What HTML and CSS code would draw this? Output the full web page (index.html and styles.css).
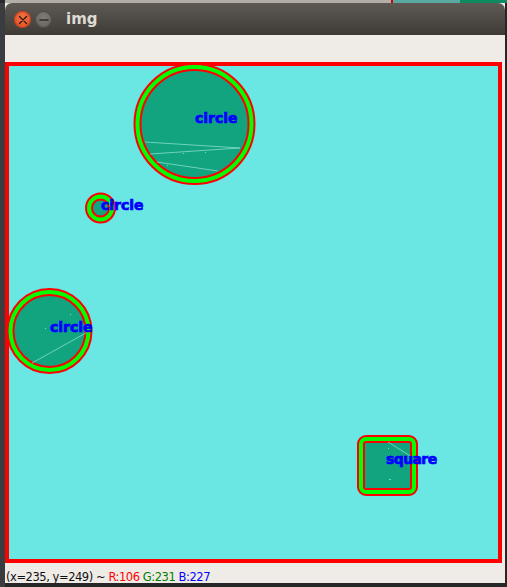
FILE: index.html
```html
<!DOCTYPE html>
<html>
<head>
<meta charset="utf-8">
<link rel="stylesheet" href="styles.css">
</head>
<body>
<div class="window">
  <div class="titlebar">
    <span class="btn btn-close"><svg width="10" height="10" viewBox="0 0 10 10"><path d="M1.5 1.5 L8.5 8.5 M8.5 1.5 L1.5 8.5" stroke="#3a1a10" stroke-width="1.4" stroke-linecap="round"/></svg></span>
    <span class="btn btn-min"><svg width="10" height="10" viewBox="0 0 10 10"><path d="M1 5 H9" stroke="#2e2c29" stroke-width="1.5" stroke-linecap="round"/></svg></span>
    <span class="title">img</span>
  </div>
  <div class="toolbar"></div>
  <div class="canvas-row">
    <svg class="canvas" width="497" height="501" viewBox="0 0 497 501">
      <rect x="2" y="2" width="493" height="497" fill="#6ae7e3" stroke="#ff0000" stroke-width="4"/>
      <!-- big circle -->
      <circle cx="189.5" cy="62" r="57" fill="#12a47f" stroke="#ff0000" stroke-width="8"/>
      <circle cx="189.5" cy="62" r="57" fill="none" stroke="#00ff00" stroke-width="4"/>
      <g class="streak">
        <line x1="140" y1="80" x2="235" y2="86"/>
        <line x1="145" y1="92" x2="235" y2="86"/>
        <line x1="152" y1="100" x2="213" y2="109"/>
      </g>
      <!-- small circle -->
      <circle cx="95.5" cy="146" r="11.5" fill="#12a47f" stroke="#ff0000" stroke-width="8"/>
      <circle cx="95.5" cy="146" r="11.5" fill="none" stroke="#00ff00" stroke-width="4"/>
      <!-- left circle -->
      <circle cx="44.5" cy="269" r="39" fill="#12a47f" stroke="#ff0000" stroke-width="8"/>
      <circle cx="44.5" cy="269" r="39" fill="none" stroke="#00ff00" stroke-width="4"/>
      <g class="streak">
        <line x1="27" y1="301" x2="81" y2="271"/>
      </g>
      <!-- square -->
      <rect x="356" y="377" width="53" height="53" rx="5" fill="#12a47f" stroke="#ff0000" stroke-width="8"/>
      <rect x="356" y="377" width="53" height="53" rx="5" fill="none" stroke="#00ff00" stroke-width="4"/>
      <g class="streak">
        <line x1="383" y1="380" x2="407" y2="395"/>
      </g>
      <g class="dots">
        <rect x="178" y="91" width="1" height="1"/>
        <rect x="200" y="90" width="1" height="1"/>
        <rect x="162" y="103" width="1" height="1"/>
        <rect x="40" y="266" width="1" height="1"/>
        <rect x="65" y="252" width="1" height="1"/>
        <rect x="384" y="417" width="2" height="1"/>
        <rect x="383" y="386" width="1" height="1"/>
      </g>
      <text class="label" x="190" y="61">circle</text>
      <text class="label" x="96" y="148">circle</text>
      <text class="label" x="45" y="270">circle</text>
      <text class="label label-sq" x="381" y="402">square</text>
    </svg>
  </div>
  <div class="statusbar"><span>(x=235, y=249) ~ </span><span class="r">R:106</span> <span class="g">G:231</span> <span class="b">B:227</span></div>
</div>
</body>
</html>
```
FILE: styles.css
```css
html, body {
  margin: 0;
  padding: 0;
}
body {
  width: 507px;
  height: 587px;
  overflow: hidden;
  background:
    linear-gradient(90deg, #2b2b2b 0 5px, #b3aea7 5px 391px, #d00000 391px 393px, #5aa9a1 393px 460px, #0f8a60 460px) top left / 100% 3px no-repeat,
    linear-gradient(90deg, #3a3d40 0 5px, #262626 5px) #262626;
}
.window {
  margin: 3px 0 0 5px;
  width: 500px;
  height: 580px;
  background: #efebe7;
  display: flex;
  flex-direction: column;
  overflow: hidden;
}
.titlebar {
  height: 32px;
  flex: none;
  border-radius: 7px 7px 0 0;
  background: linear-gradient(#5e5953, #3e3b36);
  display: flex;
  align-items: center;
  padding-left: 9px;
  padding-top: 1px;
  box-sizing: border-box;
}
.btn {
  width: 17px;
  height: 17px;
  border-radius: 50%;
  display: flex;
  align-items: center;
  justify-content: center;
  margin-right: 4px;
}
.btn-close {
  background: radial-gradient(circle at 50% 40%, #f47448, #d9471b);
  box-shadow: inset 0 0 0 1px #b7401c;
}
.btn-min {
  background: radial-gradient(circle at 50% 40%, #807c76, #5f5b56);
  box-shadow: inset 0 0 0 1px #4a4742;
}
.title {
  margin-left: 10px;
  font-family: "DejaVu Sans", sans-serif;
  font-weight: bold;
  font-size: 15px;
  color: #dfdbd2;
  margin-top: -2px;
}
.toolbar {
  height: 27px;
  flex: none;
  background: #efebe7;
}
.canvas-row {
  height: 501px;
  flex: none;
  display: flex;
}
.canvas {
  display: block;
  flex: none;
}
.streak line {
  stroke: #7fdcc9;
  stroke-width: 1;
  opacity: 0.85;
}
.dots rect {
  fill: #6fdcc3;
}
.label {
  font-family: "DejaVu Sans", sans-serif;
  font-weight: bold;
  font-size: 14px;
  fill: #0000ff;
  stroke: #0000ff;
  stroke-width: 0.7px;
}
.label-sq {
  letter-spacing: -0.6px;
}
.statusbar {
  height: 20px;
  flex: none;
  box-sizing: border-box;
  padding: 8px 0 0 1px;
  font-family: "DejaVu Sans", sans-serif;
  font-size: 11.5px;
  line-height: 13px;
  color: #111;
  white-space: nowrap;
  overflow: hidden;
  letter-spacing: -0.45px;
}
.r { color: #ff0000; }
.g { color: #008000; }
.b { color: #0000ff; }
```
